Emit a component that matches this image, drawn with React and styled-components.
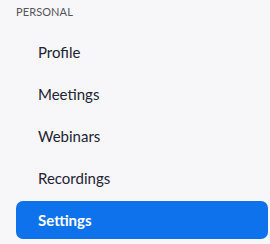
import styled, { createGlobalStyle } from "styled-components";

const GlobalStyle = createGlobalStyle`
  html, body {
    margin: 0;
    padding: 0;
    background: #f7f7fa;
  }
  body {
    font-family: Lato, "Open Sans", sans-serif;
  }
`;

const items = ["Profile", "Meetings", "Webinars", "Recordings", "Settings"];

export default function App() {
  const current = "Settings";
  return (
    <Sidebar>
      <GlobalStyle />
      <Heading>PERSONAL</Heading>
      <Menu>
        {items.map((item) => (
          <Item key={item} $active={item === current}>
            {item}
          </Item>
        ))}
      </Menu>
    </Sidebar>
  );
}

const Sidebar = styled.nav`
  width: 270px;
  height: 244px;
  padding: 5px 2px 0 16px;
  box-sizing: border-box;
`;

const Heading = styled.div`
  font-size: 11px;
  line-height: 14px;
  color: #555559;
  letter-spacing: 0.1px;
`;

const Menu = styled.ul`
  list-style: none;
  margin: 14px 0 0;
  padding: 0;
  display: flex;
  flex-direction: column;
  gap: 4px;
`;

const Item = styled.li`
  height: 38px;
  display: flex;
  align-items: center;
  padding-left: 22px;
  border-radius: 7px;
  font-size: 15px;
  font-weight: ${(p) => (p.$active ? 700 : 400)};
  color: ${(p) => (p.$active ? "#ffffff" : "#232333")};
  background: ${(p) => (p.$active ? "#0e72ed" : "transparent")};
`;
